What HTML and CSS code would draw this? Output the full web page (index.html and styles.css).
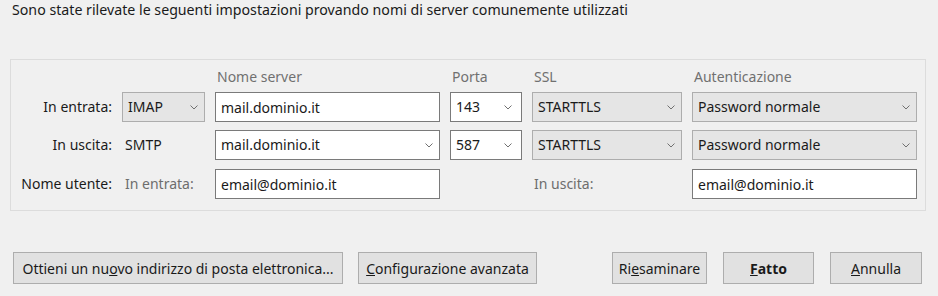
FILE: index.html
```html
<!DOCTYPE html>
<html>
<head>
  <meta charset="UTF-8">
  <title>Configurazione account</title>
  <link rel="stylesheet" href="styles.css">
</head>
<body>
  <p class="intro">Sono state rilevate le seguenti impostazioni provando nomi di server comunemente utilizzati</p>

  <div class="group">
    <div class="spacer"></div>
    <div class="head">Nome server</div>
    <div class="head">Porta</div>
    <div class="head">SSL</div>
    <div class="head">Autenticazione</div>

    <div class="label">In entrata:</div>
    <div class="combo grey">IMAP<svg class="arrow" width="8" height="5"><polyline points="0.5,0.5 4,4 7.5,0.5"/></svg></div>
    <input class="field" type="text" value="mail.dominio.it">
    <div class="combo wide-arrow">143<svg class="arrow" width="8" height="5"><polyline points="0.5,0.5 4,4 7.5,0.5"/></svg></div>
    <div class="combo grey">STARTTLS<svg class="arrow" width="8" height="5"><polyline points="0.5,0.5 4,4 7.5,0.5"/></svg></div>
    <div class="combo grey">Password normale<svg class="arrow" width="8" height="5"><polyline points="0.5,0.5 4,4 7.5,0.5"/></svg></div>

    <div class="label">In uscita:</div>
    <div class="plain">SMTP</div>
    <div class="combo">mail.dominio.it<svg class="arrow" width="8" height="5"><polyline points="0.5,0.5 4,4 7.5,0.5"/></svg></div>
    <div class="combo wide-arrow">587<svg class="arrow" width="8" height="5"><polyline points="0.5,0.5 4,4 7.5,0.5"/></svg></div>
    <div class="combo grey">STARTTLS<svg class="arrow" width="8" height="5"><polyline points="0.5,0.5 4,4 7.5,0.5"/></svg></div>
    <div class="combo grey">Password normale<svg class="arrow" width="8" height="5"><polyline points="0.5,0.5 4,4 7.5,0.5"/></svg></div>

    <div class="label last">Nome utente:</div>
    <div class="plain muted last">In entrata:</div>
    <input class="field last" type="text" value="email@dominio.it">
    <div class="plain muted out-label last">In uscita:</div>
    <input class="field last" type="text" value="email@dominio.it">
  </div>

  <div class="buttons">
    <div class="left">
      <button class="btn b-new">Ottieni un nu<u>o</u>vo indirizzo di posta elettronica...</button>
      <button class="btn b-adv"><u>C</u>onfigurazione avanzata</button>
    </div>
    <div class="right">
      <button class="btn b-re">Ri<u>e</u>saminare</button>
      <button class="btn b-done"><b><u>F</u>atto</b></button>
      <button class="btn b-cancel"><u>A</u>nnulla</button>
    </div>
  </div>
</body>
</html>
```

FILE: styles.css
```css
body {
  margin: 0;
  padding: 0;
  width: 938px;
  height: 296px;
  background-color: #f0f0f0;
  font-family: "Noto Sans", "Open Sans", sans-serif;
  font-size: 14px;
  color: #1a1a1a;
  overflow: hidden;
}

.intro {
  margin: 0;
  padding-left: 12px;
  line-height: 20px;
  font-size: 14.2px;
}

.group {
  box-sizing: border-box;
  width: 916px;
  height: 152px;
  margin: 39px 0 0 10px;
  border: 1px solid #dcdcdc;
  padding: 0 8px 0 0;
  display: grid;
  grid-template-columns: 101px 83px 225px 72px 150px 225px;
  grid-template-rows: 24px 30px 30px 31px;
  column-gap: 10px;
  row-gap: 8px;
}

.spacer {
  grid-column: span 2;
}

.head {
  height: 20px;
  line-height: 20px;
  margin-top: 7px;
  padding-left: 2px;
  color: #707070;
}

.label {
  text-align: right;
  line-height: 30px;
}

.plain {
  line-height: 30px;
  padding-left: 3px;
}
.muted {
  color: #6d6d6d;
}
.out-label {
  grid-column: 5;
  padding-left: 2px;
}
.last {
  align-self: end;
}

.field,
.combo {
  box-sizing: border-box;
  height: 30px;
  margin: 0;
  border: 1px solid #7a7a7a;
  background-color: #fff;
  font-family: inherit;
  font-size: 14px;
  color: #1a1a1a;
  padding: 0 0 0 5px;
  line-height: 28px;
}
.field {
  width: 100%;
  outline: none;
}

.combo {
  position: relative;
}
.combo.grey {
  background-color: #e5e5e5;
  border-color: #adadad;
}
.arrow {
  position: absolute;
  right: 6px;
  top: 12px;
  fill: none;
  stroke: #707070;
  stroke-width: 1;
}
.wide-arrow .arrow {
  right: 9px;
}

.buttons {
  display: flex;
  justify-content: space-between;
  margin-top: 41px;
  padding: 0 16px 0 13px;
}
.left,
.right {
  display: flex;
}
.left { gap: 15px; }
.right { gap: 16px; }

.btn {
  box-sizing: border-box;
  height: 32px;
  margin: 0;
  padding: 0;
  border: 1px solid #adadad;
  background-color: #e1e1e1;
  font-family: inherit;
  font-size: 14px;
  color: #1a1a1a;
  white-space: nowrap;
}
.b-new { width: 330px; }
.b-adv { width: 179px; }
.b-re { width: 95px; }
.b-done { width: 91px; }
.b-cancel { width: 92px; }
```
